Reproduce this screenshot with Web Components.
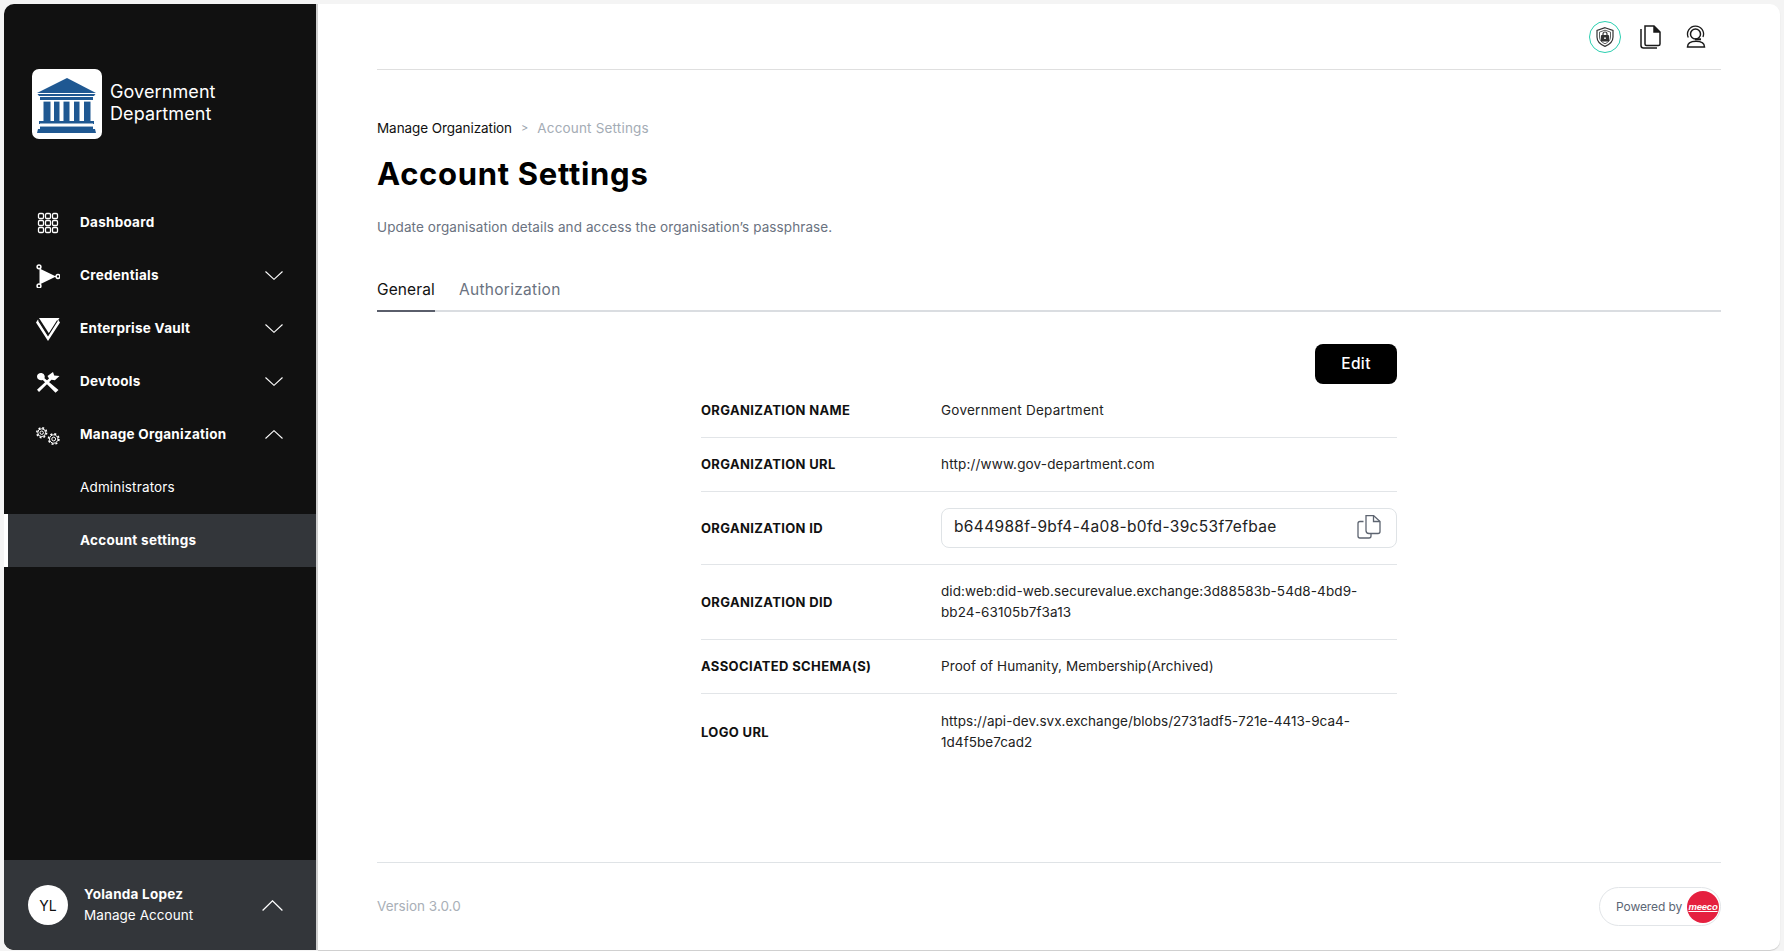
<!DOCTYPE html>
<html lang="en"><head><meta charset="utf-8"><title>Account Settings</title>
<style>
html,body{margin:0;height:100%;background:#f4f4f4;font-family:Inter,"Liberation Sans",sans-serif;overflow:hidden}
</style></head>
<body>
<app-shell>
  <side-bar slot="side">
    <brand-logo></brand-logo>
    <nav-item label="Dashboard" icon="grid"></nav-item>
    <nav-item label="Credentials" icon="cred" chevron="down"></nav-item>
    <nav-item label="Enterprise Vault" icon="vault" chevron="down"></nav-item>
    <nav-item label="Devtools" icon="tools" chevron="down"></nav-item>
    <nav-item label="Manage Organization" icon="gears" chevron="up"></nav-item>
    <nav-item label="Administrators" sub></nav-item>
    <nav-item label="Account settings" sub active></nav-item>
    <user-footer slot="footer"></user-footer>
  </side-bar>
  <main-panel slot="main">
    <top-icons></top-icons>
    <page-head></page-head>
    <tab-bar></tab-bar>
    <detail-card>
      <detail-row label="ORGANIZATION NAME" h="53" ls=".25">Government Department</detail-row>
      <detail-row label="ORGANIZATION URL" h="53" ls=".16">http://www.gov-department.com</detail-row>
      <detail-row label="ORGANIZATION ID" h="72"><copy-field>b644988f-9bf4-4a08-b0fd-39c53f7efbae</copy-field></detail-row>
      <detail-row label="ORGANIZATION DID" h="74" ls=".1">did:web:did-web.securevalue.exchange:3d88583b-54d8-4bd9-<br>bb24-63105b7f3a13</detail-row>
      <detail-row label="ASSOCIATED SCHEMA(S)" h="53" ls=".08">Proof of Humanity, Membership(Archived)</detail-row>
      <detail-row label="LOGO URL" h="75" ls=".05" last>https://api-dev.svx.exchange/blobs/2731adf5-721e-4413-9ca4-<br>1d4f5be7cad2</detail-row>
    </detail-card>
    <page-foot></page-foot>
  </main-panel>
</app-shell>
<script>
const FONT='Inter,"Liberation Sans",sans-serif';
function def(name,html){
  customElements.define(name,class extends HTMLElement{
    connectedCallback(){
      if(this.shadowRoot)return;
      const r=this.attachShadow({mode:'open'});
      r.innerHTML=typeof html==='function'?html(this):html;
    }
  });
}
const ICONS={
 grid:`<svg width="24" height="24" viewBox="0 0 24 24" fill="none" stroke="#fff" stroke-width="1.3">${[2.5,9.5,16.5].map(y=>[2.5,9.5,16.5].map(x=>`<rect x="${x}" y="${y}" width="5" height="5" rx="1.2"/>`).join('')).join('')}</svg>`,
 cred:`<svg width="24" height="24" viewBox="0 0 24 24" fill="#fff"><path d="M3.500 4.500 L20 12.500 L3.500 20.500Z"/><path d="M2 3 L5 5M2 22L5 20M18 12.500h3" stroke="#fff" stroke-width="1.200"/><g fill="#111" stroke="#fff" stroke-width="1.500"><circle cx="3" cy="2.800" r="1.900"/><circle cx="3" cy="22" r="1.900"/><circle cx="22" cy="12.500" r="1.900"/></g></svg>`,
 vault:`<svg width="24" height="24" viewBox="0 0 24 24" fill="#fff"><path d="M0 5.500L12 24L24 5.500L22 2.500L12 18.500L2 2.500Z"/><path d="M3 1H23.500L13 16.500Z"/><path d="M2.500 3.500L12 18.500L21.500 3.500" fill="none" stroke="#111" stroke-width="1.100"/></svg>`,
 tools:`<svg width="24" height="24" viewBox="0 0 24 24" fill="#fff"><path d="M3 22l-2-2.200L13 8.500 11.500 6 17 2l1.200 3.500 5.300.4-4.600 4.300-3.400-.4z"/><path d="M1 6.500C1 3.800 3.800 2.500 6.200 3.200c2.300.8 3.100 3.200 2.300 5L22.500 20 19.500 22.800 6.800 10C4.300 10.700 1 9.600 1 6.500z"/></svg>`,
 gears:`<svg width="24" height="24" viewBox="0 0 24 24" fill="none" stroke="#fff" stroke-width="1"><circle cx="5.700" cy="9.700" r="1.700"/><circle cx="5.700" cy="9.700" r="4.900" stroke-dasharray="1.900 1.950" stroke-width="1.600"/><circle cx="5.700" cy="9.700" r="3.900"/><circle cx="17.700" cy="16" r="1.900"/><circle cx="17.700" cy="16" r="5.200" stroke-dasharray="2 2.080" stroke-width="1.600"/><circle cx="17.700" cy="16" r="4.200"/></svg>`
};
const chev=(d,w=18,h=9)=>`<svg width="${w}" height="${h}" viewBox="0 0 18 9" fill="none" stroke="#fff" stroke-width="1.1" preserveAspectRatio="none"><path d="${d==='up'?'M.5 8.500 9 .7l8.500 7.800':'M.5.5 9 8.300 17.500.5'}"/></svg>`;

def('app-shell',`<style>:host{display:flex;box-sizing:border-box;height:951px;padding:4px 4px 1px 4px;color:#111;font-family:${FONT}}
.s{display:flex;flex:0 0 314px}.m{display:flex;flex:1;min-width:0}</style>
<div class="s"><slot name="side"></slot></div><div class="m"><slot name="main"></slot></div>`);

def('side-bar',`<style>:host{display:flex;flex-direction:column;width:312px;background:#111;border-radius:10px 0 0 10px;overflow:hidden;box-shadow:2px 0 0 #cfcfcf;position:relative;z-index:1;color:#fff}
.foot{margin-top:auto;display:flex}</style><slot></slot><div class="foot"><slot name="footer"></slot></div>`);

def('brand-logo',`<style>:host{display:flex;align-items:center;gap:8px;padding:65px 28px 57px;height:70px}
.b{width:70px;height:70px;background:#fff;border-radius:7px;flex:none;display:flex}
.t{font-size:18px;line-height:22px;margin-top:-2px;letter-spacing:.1px;color:#fff;font-weight:400}</style>
<div class="b"><svg width="70" height="70" viewBox="0 0 70 70" fill="#1f5892">
<path d="M35 9 L64 24 H5Z"/><path d="M5.500 25h58l-1.500 2H7z"/><rect x="8" y="28" width="53" height="3.500"/>
<rect x="11.500" y="29" width="7" height="25"/><rect x="22" y="29" width="5.500" height="25"/><rect x="31.500" y="29" width="6" height="25"/><rect x="42" y="29" width="5.500" height="25"/><rect x="52" y="29" width="6.500" height="25"/>
<rect x="7" y="52" width="55" height="3"/><rect x="8" y="57.500" width="53" height="3"/><path d="M6 60h57l1 4H5z"/>
<rect x="8" y="31" width="53" height="1.600" fill="#fff"/><rect x="8" y="54.500" width="53" height="2.600" fill="#fff"/></svg></div>
<div class="t">Government<br>Department</div>`);

def('nav-item',h=>{
 const sub=h.hasAttribute('sub'),act=h.hasAttribute('active'),ic=h.getAttribute('icon'),ch=h.getAttribute('chevron');
 const bold=!sub||act;
 return `<style>:host{display:flex;align-items:center;height:53px;box-sizing:border-box;padding:0 33px 0 32px;${act?'background:#33363a;border-left:4px solid #fff;padding-left:28px;':''}}
 .i{width:24px;height:24px;flex:none;display:flex;margin-right:20px}
 .pad{width:44px;flex:none}
 .l{flex:1;font-size:13.5px;letter-spacing:${bold?'.27px':'.15px'};font-weight:${bold?700:400};color:#fff;white-space:nowrap;padding-bottom:2px}
 .c{display:flex}</style>
 ${ic?`<span class="i">${ICONS[ic]}</span>`:'<span class="pad"></span>'}<span class="l">${h.getAttribute('label')}</span>${ch?`<span class="c">${chev(ch)}</span>`:''}`;
});

def('user-footer',`<style>:host{display:flex;flex:1;align-items:center;height:90px;background:#33363a;padding:0 33px 0 24px;color:#fff;box-sizing:border-box}
.a{width:40px;height:40px;border-radius:50%;background:#fff;color:#111;display:flex;align-items:center;justify-content:center;font-size:14px;margin-right:16px;flex:none}
.n{flex:1;font-size:13.500px;letter-spacing:.05px;line-height:21px}.n b{display:block;font-weight:700;letter-spacing:.24px}</style>
<span class="a">YL</span><div class="n"><b>Yolanda Lopez</b>Manage Account</div>${chev('up',21,11)}`);

def('main-panel',`<style>:host{display:flex;flex-direction:column;flex:1;min-width:0;background:#fff;border-radius:0 10px 10px 0;padding:0 59px 0 59px;box-shadow:0 1px 1px #ccc}</style><slot></slot>`);

def('top-icons',`<style>:host{display:flex;justify-content:flex-end;align-items:center;gap:14px;height:65px;border-bottom:1px solid #dfdfdf;padding-right:9px}
.w{width:32px;height:32px;display:flex;align-items:center;justify-content:center;box-sizing:border-box}
.r{border:1px solid #2bcfb0;border-radius:50%;margin-right:-1px}</style>
<span class="w r"><svg width="18" height="20" viewBox="0 0 18 20" fill="none" stroke="#333" stroke-width="1.200"><path d="M9 .7l8 2.800v6.500c0 4.600-3.400 7.500-8 9.400C4.400 17.500 1 14.600 1 10V3.500z"/><path d="M9 3.200l5.500 1.900V10c0 3.200-2.300 5.300-5.500 6.800C5.800 15.300 3.500 13.200 3.500 10V5.100z" stroke-width=".8"/><rect x="5.500" y="8.500" width="7" height="5.500" rx=".6" fill="#333"/><path d="M7 8.500V7a2 2 0 014 0v1.500"/><circle cx="9" cy="11.200" r=".9" fill="#fff" stroke="none"/></svg></span>
<span class="w"><svg width="22" height="24" viewBox="0 0 22 24" fill="none" stroke="#1b1b1b" stroke-width="1.500"><path d="M6 1h9l6 6v12a1.500 1.500 0 01-1.500 1.500h-12A1.500 1.500 0 016 19z"/><path d="M15 1v6h6" fill="#1b1b1b"/><path d="M2 4v16.500a2.500 2.500 0 002.500 2.500H18"/></svg></span>
<span class="w"><svg width="22" height="23" viewBox="0 0 22 23" fill="none" stroke="#1b1b1b" stroke-width="1.500"><circle cx="10.500" cy="9" r="5"/><path d="M3.300 12.500A8 8 0 1 1 18 12" stroke-width="1.300"/><path d="M10 14.300h6" stroke-width="2"/><path d="M2.500 22c0-4 3-5.800 8.500-5.800s8.500 1.800 8.500 5.800z"/></svg></span>`);

def('page-head',`<style>:host{display:block}
.bc{margin-top:48px;height:20px;line-height:20px;font-size:13.5px;letter-spacing:-.07px;color:#111;display:flex;align-items:center;gap:9px}
.bc i{color:#9aa3ad;font-style:normal;font-size:11px}.bc span{color:#a4acb5;letter-spacing:.18px}
h1{margin:16px 0 0;font-size:31px;line-height:40px;font-weight:700;color:#000;letter-spacing:.7px}
p{margin:23px 0 0;font-size:13.500px;line-height:20px;letter-spacing:.1px;color:#6a7280}</style>
<div class="bc">Manage Organization <i>&gt;</i> <span>Account Settings</span></div>
<h1>Account Settings</h1><p>Update organisation details and access the organisation’s passphrase.</p>`);

def('tab-bar',`<style>:host{display:flex;gap:24px;margin-top:33px;height:40px;border-bottom:2px solid #dadde1;box-sizing:content-box}
.t{font-size:15.500px;letter-spacing:.3px;line-height:26px;color:#6a7280;box-sizing:border-box;height:42px;padding-top:7px;white-space:nowrap}
.a{color:#111;border-bottom:2px solid #5a5e6b;letter-spacing:.12px}</style>
<span class="t a">General</span><span class="t">Authorization</span>`);

def('detail-card',`<style>:host{display:block;width:696px;margin:32px 0 0 324px}
.e{display:flex;justify-content:flex-end}
button{width:82px;height:40px;background:#000;color:#fff;border:0;border-radius:8px;font:500 15.500px ${FONT};letter-spacing:.4px;padding:0 0 1px}</style>
<div class="e"><button>Edit</button></div><slot></slot>`);

def('detail-row',h=>`<style>:host{display:grid;grid-template-columns:240px 1fr;align-items:center;box-sizing:border-box;height:${+h.getAttribute('h')+1}px;${h.hasAttribute('last')?'':'border-bottom:1px solid #e2e5e8;'}}
.l{font-size:13px;font-weight:700;letter-spacing:.35px;color:#111;white-space:nowrap;padding-bottom:1px}
.v{font-size:13.500px;line-height:20.800px;letter-spacing:${h.getAttribute('ls')||0}px;color:#222;white-space:nowrap;min-width:0;padding-bottom:1px}</style>
<span class="l">${h.getAttribute('label')}</span><div class="v"><slot></slot></div>`);

def('copy-field',`<style>:host{display:flex;align-items:center;justify-content:space-between;box-sizing:border-box;height:40px;border:1px solid #dfe3e6;border-radius:8px;padding:0 14px 0 12px;font-size:15.500px;letter-spacing:.34px;color:#222}
svg{margin:-2px 1px 0 0}</style>
<slot></slot><svg width="24" height="24" viewBox="0 0 24 24" fill="none" stroke="#5d6470" stroke-width="1.300"><path d="M6.500 6.500H3a2 2 0 00-2 2V21a2 2 0 002 2h9a2 2 0 002-2v-2"/><path d="M9 1h7.500L23 7v10a2 2 0 01-2 2h-9a3 3 0 01-3-3V1z" transform="translate(0 -.5)"/><path d="M16.500 1v5.500H23"/></svg>`);

def('page-foot',`<style>:host{display:flex;align-items:center;justify-content:space-between;margin-top:auto;height:87px;border-top:1px solid #dfe3e6;box-sizing:content-box;font-size:13.500px;color:#a9afb7}
.p{display:flex;align-items:center;justify-content:space-between;box-sizing:border-box;width:122px;height:39px;border:1px solid #e2e5e8;border-radius:20px;padding:0 1px 0 16px;font-size:12px;letter-spacing:-.1px;color:#5c6675}
.v{padding-bottom:1px}
.m{width:32px;height:32px;border-radius:50%;background:#e5203f;color:#fff;display:flex;align-items:center;justify-content:center;font:italic 700 9.500px "Liberation Sans",sans-serif;letter-spacing:-.2px;line-height:9px}
.m u{text-decoration-thickness:1px;text-underline-offset:1px}</style>
<span class="v">Version 3.0.0</span><span class="p">Powered by<span class="m"><u>meeco</u></span></span>`);
</script>
</body></html>
